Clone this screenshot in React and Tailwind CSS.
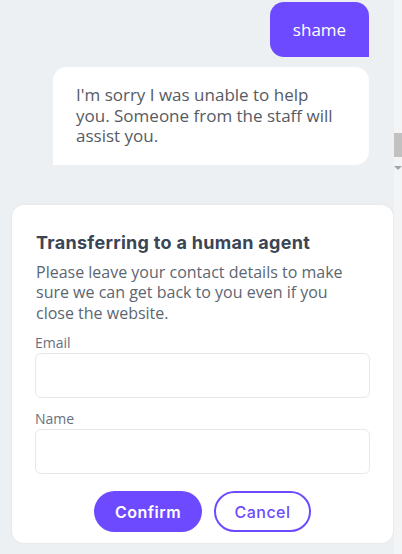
import React from "react";

const openSans = { fontFamily: '"Open Sans", "Noto Sans", sans-serif' };

const Field = ({ label, className }) => (
    <div className={className}>
        <label className="block text-[14px] leading-[20px] text-[#68707c]">{label}</label>
        <input className="block w-full h-[45px] rounded-[6px] border border-[#e6e8ea] bg-white outline-none px-3" />
    </div>
);

export default function App() {
    return (
        <div className="w-[402px] h-[554px] bg-[#edf0f3] flex overflow-hidden" style={openSans}>
            <div className="flex-1 flex flex-col">
                <div className="self-end mr-[25px] mt-[2px] w-[99px] h-[55px] bg-[#6d4aff] text-white text-[17px] rounded-[14px] rounded-br-none flex items-center justify-center">
                    shame
                </div>

                <div className="ml-[53px] mr-[25px] mt-[10px] bg-white rounded-[14px] rounded-bl-none pl-[23px] pr-[30px] pt-[18px] pb-[18px] text-[17px] leading-[20.5px] text-[#555b63]">
                    I'm sorry I was unable to help you. Someone from the staff will assist you.
                </div>

                <div className="ml-[12px] mr-[1px] mt-[40px] bg-white rounded-[12px] shadow-[0_0_3px_rgba(0,0,0,0.06)] px-[23px] pt-[26px] pb-[11px]">
                    <h2 className="text-[18px] leading-[24px] font-bold tracking-[0.3px] text-[#3a4556] pl-[1px]" style={{ fontFamily: "Inter, sans-serif" }}>
                        Transferring to a human agent
                    </h2>
                    <p className="mt-[7px] pr-[15px] text-[16px] leading-[20.5px] text-[#5c6672] pl-[1px]">
                        Please leave your contact details to make sure we can get back to you even if you close the website.
                    </p>

                    <Field label="Email" className="mt-[10px]" />
                    <Field label="Name" className="mt-[11px]" />

                    <div className="mt-[17px] flex justify-center gap-3" style={{ fontFamily: "Inter, sans-serif" }}>
                        <button className="w-[108px] h-[41px] rounded-full bg-[#6d4aff] text-white text-[16px] font-semibold tracking-[0.5px]">
                            Confirm
                        </button>
                        <button className="w-[97px] h-[41px] rounded-full border-2 border-[#6d4aff] bg-white text-[#6d4aff] text-[16px] font-medium tracking-[0.5px]">
                            Cancel
                        </button>
                    </div>
                </div>
            </div>

            <div className="w-[8px] bg-[#f3f4f6] flex flex-col items-center">
                <div className="mt-[133px] w-full h-[24px] bg-[#c1c1c1]" />
                <div className="mt-[9px] w-0 h-0 border-l-[4px] border-r-[4px] border-t-[4px] border-l-transparent border-r-transparent border-t-[#a3a3a3]" />
            </div>
        </div>
    );
}
